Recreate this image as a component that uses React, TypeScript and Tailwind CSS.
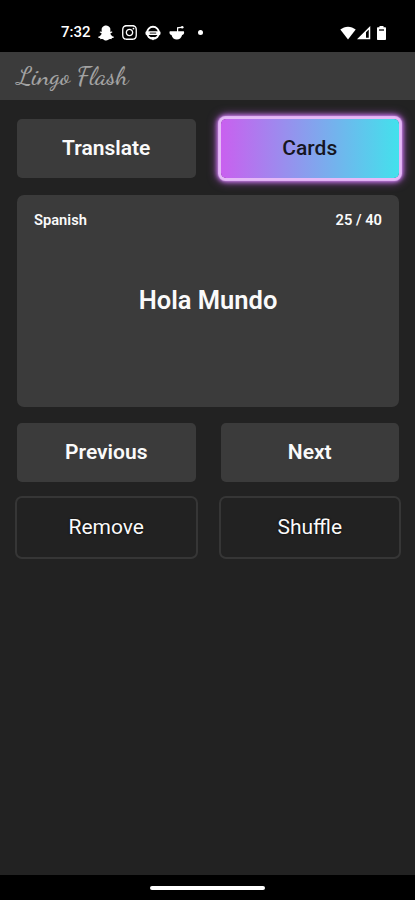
import { useState } from "react";
import { FaInstagram, FaSnapchatGhost } from "react-icons/fa";

const StatusBar = () => (
    <div className="flex h-[52px] items-center justify-between bg-black pt-[13px] pr-[28px] pl-[61px] text-white">
        <div className="flex items-center">
            <div className="w-[38px] text-[15px] leading-none font-medium">7:32</div>
            <FaSnapchatGhost size={'16px'} className="-ml-px" />
            <FaInstagram size={'17px'} className="ml-[7px]" />

            {/* Round face with a band across it */}
            <svg width="16" height="16" viewBox="0 0 16 16" fill="none" className="ml-[7px]">
                <circle cx="8" cy="7.8" r="6" stroke="white" strokeWidth="1.9" />
                <rect x="0.5" y="6.2" width="15" height="3.8" rx="1.2" fill="white" />
                <path d="M6 12h4L8 15.5z" fill="white" />
                <path d="M4.8 8.1h6.4" stroke="black" strokeWidth="0.9" />
            </svg>

            {/* Bowl with an antenna */}
            <svg width="16" height="16" viewBox="0 0 16 16" fill="none" className="ml-[8px]">
                <path d="M.8 6.3h14c.9 2-.2 3.2-1.7 3.6-.8 3-2.7 4.5-5.3 4.5s-4.5-1.5-5.3-4.5C1 9.5-.1 8.3.8 6.3z" fill="white" />
                <path d="M8.6 7V2.8L12 2.3" stroke="white" strokeWidth="1.2" />
                <circle cx="13.2" cy="2.2" r="1.3" fill="white" />
            </svg>

            <div className="ml-[13px] size-[5px] rounded-full bg-white" />
        </div>

        <div className="flex items-center">
            <svg width="16" height="14" viewBox="0 0 16 14">
                <path d="M.3 3.6C4.7-.3 11.3-.3 15.7 3.6L8 13.6z" fill="white" />
            </svg>
            <svg width="14" height="14" viewBox="0 0 14 14" className="ml-[1px]">
                <path d="M12.5 1.8v10.7H1.8z" fill="none" stroke="white" strokeWidth="1.5" />
                <path d="M9 5v8H1.5z" fill="white" />
            </svg>
            <svg width="9" height="14" viewBox="0 0 9 14" className="mr-px ml-[6px]">
                <path d="M2.5 0h4v1.3H8c.6 0 1 .4 1 1V13c0 .6-.4 1-1 1H1c-.6 0-1-.4-1-1V2.300c0-.6.4-1 1-1h1.500z" fill="white" />
                <path d="M2 4h5" stroke="black" strokeWidth="1.3" />
            </svg>
        </div>
    </div>
);

const TopBar = () => (
    <div className="flex h-[48px] items-center bg-[#3b3b3b] pl-[17px]">
        <h1 className="font-['Dancing_Script',cursive] text-[26px] leading-none font-medium whitespace-nowrap text-[#a3a3a3]">Lingo Flash</h1>
    </div>
);

const FlashCard = () => (
    <div className="flex h-[212px] flex-col rounded-[7px] bg-[#3b3b3b]">
        <div className="flex justify-between px-[17px] pt-[15px] text-[14.7px] leading-5 font-semibold">
            <div>Spanish</div>
            <div>25 / 40</div>
        </div>
        <div className="mt-[54px] text-center text-[25.5px] leading-8 font-semibold">Hola Mundo</div>
    </div>
);

const sharedButtonStyle = `flex h-[59px] cursor-pointer items-center justify-center rounded-[5px] pt-px text-[21px]`;
const filledButtonStyle = `${sharedButtonStyle} bg-[#3b3b3b] font-semibold`;
const outlinedButtonStyle = `${sharedButtonStyle} shadow-[0_0_0_2px_#363636] [text-shadow:0_0_2px_#000]`;
const selectedButtonStyle = `${sharedButtonStyle} bg-[linear-gradient(to_right,#c960ef,#43e1ec)] font-medium text-[#161622] shadow-[0_0_1px_2.5px_#e5b9f7,0_0_4px_4px_#c476e6,0_0_8px_5px_#79428f]`;

const App = () => {
    const [selectedTab, setSelectedTab] = useState('cards');

    return (
        <div className="flex h-screen flex-col bg-[#222222] font-['Roboto',sans-serif] text-[#fafafa]">
            <StatusBar />
            <TopBar />

            <div className="flex flex-1 flex-col pt-[19px] pr-4 pl-[17px]">
                <div className="grid grid-cols-2 gap-[25px]">
                    <button className={selectedTab === 'translate' ? selectedButtonStyle : filledButtonStyle} onClick={() => setSelectedTab('translate')}>Translate</button>
                    <button className={selectedTab === 'cards' ? selectedButtonStyle : filledButtonStyle} onClick={() => setSelectedTab('cards')}>Cards</button>
                </div>

                <div className="mt-[17px]">
                    <FlashCard />
                </div>

                <div className="mt-4 grid grid-cols-2 gap-x-[25px] gap-y-[16px]">
                    <button className={filledButtonStyle}>Previous</button>
                    <button className={filledButtonStyle}>Next</button>
                    <button className={outlinedButtonStyle}>Remove</button>
                    <button className={outlinedButtonStyle}>Shuffle</button>
                </div>
            </div>

            <div className="flex h-[25px] items-center justify-center bg-black">
                <div className="h-[4px] w-[115px] rounded-full bg-white" />
            </div>
        </div>
    );
};

export default App;
